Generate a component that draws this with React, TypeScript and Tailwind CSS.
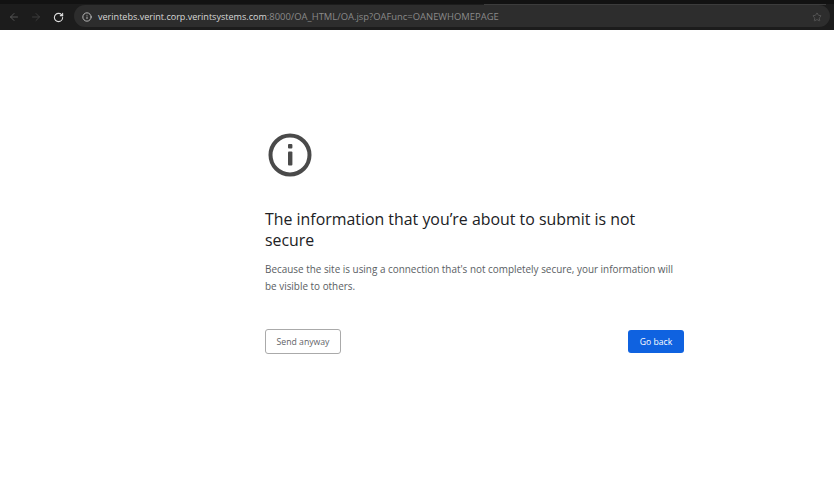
import { ArrowLeft, ArrowRight, RotateCw, Info, Star } from 'lucide-react'

const App = () => {
  return (
    <div className="h-[495px] w-[834px] overflow-hidden bg-white font-['Open_Sans',sans-serif]">
      <div className="relative h-[30px] bg-[#1c1c1c] pt-[5px]">
        <div className="absolute top-0 left-0 h-[4px] w-full bg-[#121212]" />
        <div className="absolute top-[4px] right-[8px] left-[484px] h-px bg-[#3c3c3c]" />
        <div className="flex h-[22px] items-center">
          <div className="flex w-[74px] items-center pt-[2px] pl-[8px]">
            <ArrowLeft size={12} strokeWidth={2} className="text-[#555555]" />
            <ArrowRight size={12} strokeWidth={2} className="ml-[10px] text-[#3d3d3d]" />
            <RotateCw size={11} strokeWidth={2.4} className="ml-[11px] text-[#dddddd]" />
          </div>
          <div className="flex h-[22px] w-[756px] items-center rounded-r-full rounded-l-full bg-[#2d2d2d] pt-[2px] pr-[8px] pl-[8px]">
            <Info size={10} strokeWidth={2} className="text-[#d0d0d0]" />
            <span className="ml-[6px] text-[9.05px] whitespace-nowrap text-[#d8d8d8]">
              verintebs.verint.corp.verintsystems.com
              <span className="text-[9.43px] text-[#8a8a8a]">:8000/OA_HTML/OA.jsp?OAFunc=OANEWHOMEPAGE</span>
            </span>
            <Star size={10} strokeWidth={2} className="ml-auto text-[#5a5a5a]" />
          </div>
        </div>
      </div>
      <div className="ml-[265px] w-[419px] pt-[102px]">
        <svg width="46" height="46" viewBox="0 0 46 46" className="ml-[2px]" fill="none">
          <circle cx="23" cy="23" r="19.5" stroke="#4a4a4a" strokeWidth="4" />
          <rect x="21" y="12" width="4.4" height="4.4" rx="1" fill="#4a4a4a" />
          <rect x="21" y="19.5" width="4.4" height="14" rx="1" fill="#4a4a4a" />
        </svg>
        <h1 className="mt-[31px] text-[15.9px] leading-[21px] font-normal text-[#202124]">
          The information that you’re about to submit is not secure
        </h1>
        <p className="mt-[10px] text-[9.92px] leading-[17px] text-[#5a5e63]">
          Because the site is using a connection that's not completely secure, your information will be visible to others.
        </p>
        <div className="mt-[34px] flex items-center justify-between">
          <button className="h-[25px] w-[76px] rounded-[3px] border border-[#aaaaaa] bg-white pt-[2px] text-[8.7px] text-[#5f6368]">
            Send anyway
          </button>
          <button className="h-[23px] w-[56px] rounded-[3px] bg-[#0f62e0] pt-[1px] text-[8.6px] text-white">
            Go back
          </button>
        </div>
      </div>
    </div>
  )
}

export default App
